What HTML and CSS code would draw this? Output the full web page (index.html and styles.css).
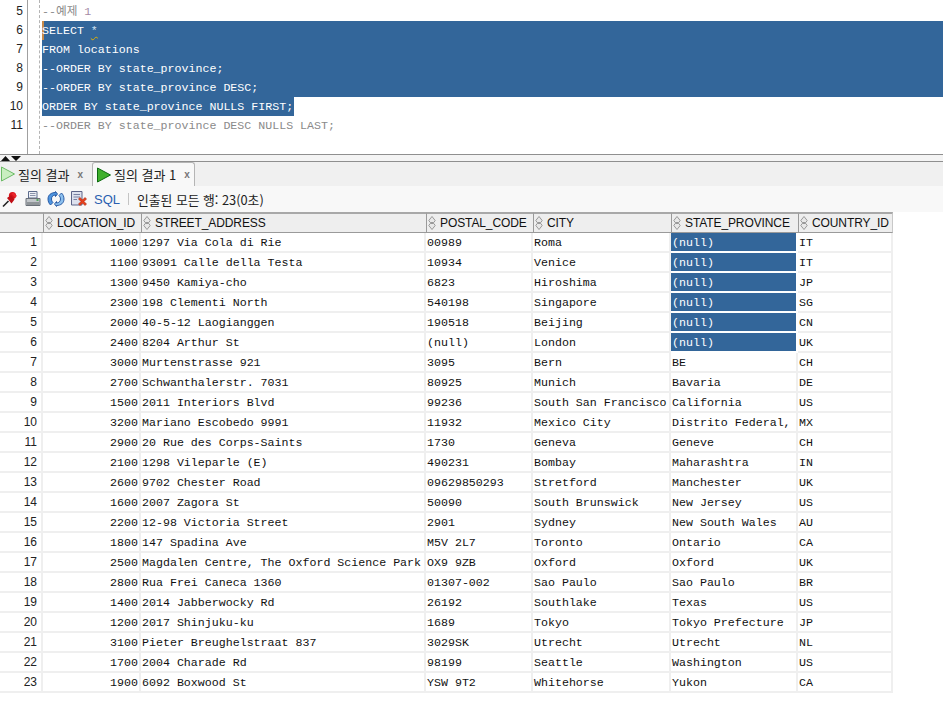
FILE: index.html
```html
<!DOCTYPE html>
<html lang="ko">
<head>
<meta charset="utf-8">
<title>질의 결과</title>
<link rel="stylesheet" href="styles.css">
</head>
<body>
<svg class="defs" width="0" height="0">
  <defs>
    <symbol id="sort" viewBox="0 0 8 14">
      <path d="M4 .5 7.200 4.500 5.800 6.500H2.200L.8 4.500Z" fill="#e8e8e8" stroke="#999" stroke-width="1"/>
      <path d="M4 13.500 7.200 9.500 5.800 7.500H2.200L.8 9.500Z" fill="#e8e8e8" stroke="#999" stroke-width="1"/>
    </symbol>
    <symbol id="run" viewBox="0 0 16 16">
      <path d="M1.500 1 14.500 8 1.500 15Z" stroke-linejoin="round"/>
    </symbol>
  </defs>
</svg>
<section class="editor">
  <div class="gutter">
    <div>5</div><div>6</div><div>7</div><div>8</div><div>9</div><div>10</div><div>11</div>
  </div>
  <div class="code">
    <div class="line comment">--예제 <span class="num">1</span></div>
    <div class="line sel caret">SELECT <span class="warn">*</span></div>
    <div class="line sel">FROM locations</div>
    <div class="line sel">--ORDER BY state_province;</div>
    <div class="line sel">--ORDER BY state_province DESC;</div>
    <div class="line"><span class="sel partial">ORDER BY state_province NULLS FIRST;</span></div>
    <div class="line comment">--ORDER BY state_province DESC NULLS LAST;</div>
  </div>
</section>
<div class="splitter">
  <svg class="split-icon" width="22" height="5" viewBox="0 0 22 5"><path d="M1 5 5.500 0 10 5ZM11 0H21L16 5Z" fill="#111"/></svg>
</div>
<nav class="tabs">
  <div class="tab">
    <svg class="run pale" width="16" height="16"><use href="#run"/></svg>
    <span class="tab-label">질의 결과</span><span class="close">x</span>
  </div>
  <div class="tab active">
    <svg class="run" width="16" height="16"><use href="#run"/></svg>
    <span class="tab-label">질의 결과 1</span><span class="close">x</span>
  </div>
</nav>
<div class="toolbar">
  <svg class="tool" width="18" height="18" viewBox="0 0 18 18"><path d="M2 16.500 7.500 11" stroke="#222" stroke-width="1.600"/><circle cx="11.500" cy="5.500" r="3.600" fill="#d8141c"/><path d="M6 8 10 5 13.500 9.500 10.500 13.500Z" fill="#c00f16"/><path d="M12.500 2.500 16 6 14 7.500 10.500 4Z" fill="#e8262c"/></svg>
  <svg class="tool" width="18" height="18" viewBox="0 0 18 18"><path d="M4.500 1.500H13V8H4.500Z" fill="#eef0f6" stroke="#5d6c8c"/><path d="M6 3.500H11.500M6 5.500H11.500" stroke="#8a94aa"/><path d="M2 8.500H16V15.500H2Z" fill="#c2c6ca" stroke="#6a7078"/><path d="M3 12H15V15H3Z" fill="#8f9498"/><path d="M12.500 10H14.500" stroke="#2f9a3a" stroke-width="1.500"/></svg>
  <svg class="tool" width="18" height="18" viewBox="0 0 18 18"><path d="M8.500 1.500 10.500 4 8.500 6.500V5C6 5 4.500 6.800 4.500 9 4.500 10.500 5 11.500 6 12.500L3.500 15C2 13.500 1 11.500 1 9 1 5 4 2.500 8.500 2.500Z" fill="#4f95df" stroke="#1d4f9c" stroke-width=".9"/><path d="M9.500 16.500 7.500 14 9.500 11.500V13C12 13 13.500 11.200 13.500 9 13.500 7.500 13 6.500 12 5.500L14.500 3C16 4.500 17 6.500 17 9 17 13 14 15.500 9.500 15.500Z" fill="#8cc0ee" stroke="#1d4f9c" stroke-width=".9"/></svg>
  <svg class="tool" width="18" height="18" viewBox="0 0 18 18"><path d="M1.500 1.500H12V15H1.500Z" fill="#dde1ee" stroke="#5d6488"/><path d="M3.500 4.500H10M3.500 7H10M3.500 9.500H7" stroke="#7a82a3"/><path d="M8.500 9 10 7.500 12.500 10 15 7.500 16.500 9 14 11.500 16.500 14 15 15.500 12.500 13 10 15.500 8.500 14 11 11.500Z" fill="#e8401c" stroke="#a82408" stroke-width=".6"/></svg>
  <span class="sql">SQL</span>
  <span class="divider"></span>
  <span class="status">인출된 모든 행: 23(0초)</span>
</div>
<table class="grid">
  <colgroup>
    <col class="c0"><col class="c1"><col class="c2"><col class="c3"><col class="c4"><col class="c5"><col class="c6">
  </colgroup>
  <thead>
    <tr>
      <th class="corner"></th>
      <th><svg class="sort" width="8" height="14"><use href="#sort"/></svg>LOCATION_ID</th>
      <th><svg class="sort" width="8" height="14"><use href="#sort"/></svg>STREET_ADDRESS</th>
      <th><svg class="sort" width="8" height="14"><use href="#sort"/></svg>POSTAL_CODE</th>
      <th><svg class="sort" width="8" height="14"><use href="#sort"/></svg>CITY</th>
      <th><svg class="sort" width="8" height="14"><use href="#sort"/></svg>STATE_PROVINCE</th>
      <th><svg class="sort" width="8" height="14"><use href="#sort"/></svg>COUNTRY_ID</th>
    </tr>
  </thead>
  <tbody>
    <tr><td class="rn">1</td><td class="id">1000</td><td>1297 Via Cola di Rie</td><td>00989</td><td>Roma</td><td class="hl">(null)</td><td>IT</td></tr>
    <tr><td class="rn">2</td><td class="id">1100</td><td>93091 Calle della Testa</td><td>10934</td><td>Venice</td><td class="hl">(null)</td><td>IT</td></tr>
    <tr><td class="rn">3</td><td class="id">1300</td><td>9450 Kamiya-cho</td><td>6823</td><td>Hiroshima</td><td class="hl">(null)</td><td>JP</td></tr>
    <tr><td class="rn">4</td><td class="id">2300</td><td>198 Clementi North</td><td>540198</td><td>Singapore</td><td class="hl">(null)</td><td>SG</td></tr>
    <tr><td class="rn">5</td><td class="id">2000</td><td>40-5-12 Laogianggen</td><td>190518</td><td>Beijing</td><td class="hl">(null)</td><td>CN</td></tr>
    <tr><td class="rn">6</td><td class="id">2400</td><td>8204 Arthur St</td><td>(null)</td><td>London</td><td class="hl">(null)</td><td>UK</td></tr>
    <tr><td class="rn">7</td><td class="id">3000</td><td>Murtenstrasse 921</td><td>3095</td><td>Bern</td><td>BE</td><td>CH</td></tr>
    <tr><td class="rn">8</td><td class="id">2700</td><td>Schwanthalerstr. 7031</td><td>80925</td><td>Munich</td><td>Bavaria</td><td>DE</td></tr>
    <tr><td class="rn">9</td><td class="id">1500</td><td>2011 Interiors Blvd</td><td>99236</td><td>South San Francisco</td><td>California</td><td>US</td></tr>
    <tr><td class="rn">10</td><td class="id">3200</td><td>Mariano Escobedo 9991</td><td>11932</td><td>Mexico City</td><td>Distrito Federal,</td><td>MX</td></tr>
    <tr><td class="rn">11</td><td class="id">2900</td><td>20 Rue des Corps-Saints</td><td>1730</td><td>Geneva</td><td>Geneve</td><td>CH</td></tr>
    <tr><td class="rn">12</td><td class="id">2100</td><td>1298 Vileparle (E)</td><td>490231</td><td>Bombay</td><td>Maharashtra</td><td>IN</td></tr>
    <tr><td class="rn">13</td><td class="id">2600</td><td>9702 Chester Road</td><td>09629850293</td><td>Stretford</td><td>Manchester</td><td>UK</td></tr>
    <tr><td class="rn">14</td><td class="id">1600</td><td>2007 Zagora St</td><td>50090</td><td>South Brunswick</td><td>New Jersey</td><td>US</td></tr>
    <tr><td class="rn">15</td><td class="id">2200</td><td>12-98 Victoria Street</td><td>2901</td><td>Sydney</td><td>New South Wales</td><td>AU</td></tr>
    <tr><td class="rn">16</td><td class="id">1800</td><td>147 Spadina Ave</td><td>M5V 2L7</td><td>Toronto</td><td>Ontario</td><td>CA</td></tr>
    <tr><td class="rn">17</td><td class="id">2500</td><td>Magdalen Centre, The Oxford Science Park</td><td>OX9 9ZB</td><td>Oxford</td><td>Oxford</td><td>UK</td></tr>
    <tr><td class="rn">18</td><td class="id">2800</td><td>Rua Frei Caneca 1360</td><td>01307-002</td><td>Sao Paulo</td><td>Sao Paulo</td><td>BR</td></tr>
    <tr><td class="rn">19</td><td class="id">1400</td><td>2014 Jabberwocky Rd</td><td>26192</td><td>Southlake</td><td>Texas</td><td>US</td></tr>
    <tr><td class="rn">20</td><td class="id">1200</td><td>2017 Shinjuku-ku</td><td>1689</td><td>Tokyo</td><td>Tokyo Prefecture</td><td>JP</td></tr>
    <tr><td class="rn">21</td><td class="id">3100</td><td>Pieter Breughelstraat 837</td><td>3029SK</td><td>Utrecht</td><td>Utrecht</td><td>NL</td></tr>
    <tr><td class="rn">22</td><td class="id">1700</td><td>2004 Charade Rd</td><td>98199</td><td>Seattle</td><td>Washington</td><td>US</td></tr>
    <tr><td class="rn">23</td><td class="id">1900</td><td>6092 Boxwood St</td><td>YSW 9T2</td><td>Whitehorse</td><td>Yukon</td><td>CA</td></tr>
  </tbody>
</table>
</body>
</html>
```

FILE: styles.css
```css
* { box-sizing: border-box; }
html, body { margin: 0; padding: 0; background: #fff; }
body {
  width: 943px;
  height: 703px;
  overflow: hidden;
  font-family: "Liberation Mono", monospace;
  color: #111;
}
.defs { position: absolute; }

.editor {
  display: flex;
  height: 155px;
  padding-top: 2px;
  border-bottom: 1px solid #8f8f8f;
}
.gutter {
  flex: 0 0 28px;
  padding-right: 4px;
  border-right: 1px solid #a0a0a0;
  font: 12px/19px "Liberation Sans", sans-serif;
  text-align: right;
  color: #222;
  margin-top: -2px;
  padding-top: 2px;
}
.code {
  flex: 1;
  margin-left: 11px;
  padding-left: 3px;
  border-left: 1px dashed #b4b4b4;
  margin-top: -2px;
  padding-top: 2px;
  min-width: 0;
}
.line {
  height: 19px;
  font-size: 11.63px;
  line-height: 19px;
  white-space: pre;
  margin-left: -1px;
}
.comment { color: #8a8a8a; font-family: "Liberation Mono", "Noto Sans CJK KR", monospace; }
.num { color: #a58aa5; }
.sel { background: #33669a; color: #fff; }
.partial { display: inline-block; height: 19px; width: 252px; }
.caret { box-shadow: inset 2px 0 0 #c98a4a; }
.warn { text-decoration: underline wavy #e0b000 1px; text-underline-offset: 2px; color: #cfe0f0; }

.splitter {
  height: 6px;
  background: #f4f4f4;
  position: relative;
}
.split-icon { position: absolute; left: 0; top: 1px; }

.tabs {
  display: flex;
  align-items: flex-end;
  height: 25px;
  background: #f0f0f0;
  border-top: 1px solid #8f8f8f;
}
.tab {
  display: flex;
  align-items: center;
  gap: 2px;
  width: 92px;
  height: 24px;
  font: 13px "Noto Sans CJK KR", sans-serif;
  color: #222;
}
.tab.active {
  width: 103px;
  padding-left: 3px;
  background: #f8f8f8;
  border: 1px solid #b5b5b5;
  border-bottom: 0;
  border-radius: 3px 3px 0 0;
}
.run { fill: #3fb02c; stroke: #0c6a10; stroke-width: 1; flex: none; }
.run.pale { fill: #c9eec0; stroke: #6cbb66; }
.tab-label { white-space: nowrap; }
.close {
  margin-left: 6px;
  font: bold 10px "Liberation Sans", sans-serif;
  color: #777;
}

.toolbar {
  display: flex;
  align-items: center;
  height: 26px;
  padding-left: 1px;
  gap: 5px;
  background: #f8f8f8;
}
.tool { flex: none; }
.sql {
  margin-left: 1px;
  font: 13px "Liberation Sans", sans-serif;
  color: #2a5fb0;
}
.divider {
  width: 1px;
  height: 12px;
  margin: 0 3px;
  background: #c4c4c4;
}
.status {
  font: 12.8px "Noto Sans CJK KR", sans-serif;
  color: #222;
}

.grid {
  table-layout: fixed;
  width: 893px;
  border-collapse: separate;
  border-spacing: 0;
}
.c0 { width: 43px; }
.c1 { width: 98px; }
.c2 { width: 285px; }
.c3 { width: 107px; }
.c4 { width: 138px; }
.c5 { width: 127px; }
.c6 { width: 95px; }
.grid th {
  height: 21px;
  padding: 0 0 0 1px;
  background: #eeeeee;
  border-top: 2px solid #a8a8a8;
  border-bottom: 1px solid #9a9a9a;
  border-left: 1px solid #9a9a9a;
  font: 12px "Liberation Sans", sans-serif;
  letter-spacing: -0.1px;
  text-align: left;
  white-space: nowrap;
  overflow: hidden;
  color: #111;
}
.grid th.corner { border-left: 0; }
.grid th:last-child { border-right: 1px solid #c8c8c8; }
.sort { vertical-align: -3px; margin-right: 4px; }
.grid td {
  height: 20px;
  padding: 0 0 0 1px;
  border-bottom: 2px solid #efefef;
  border-right: 2px solid #efefef;
  font-size: 11.63px;
  white-space: nowrap;
  overflow: hidden;
}
.grid td.rn {
  padding: 0 4px 0 0;
  text-align: right;
  font: 12px "Liberation Sans", sans-serif;
  color: #222;
}
.grid td.id { text-align: right; padding: 0 1px 0 0; }
.grid td.hl {
  background: #33669a;
  color: #fff;
  border-bottom-color: #fff;
  border-right-color: #fff;
}
```
